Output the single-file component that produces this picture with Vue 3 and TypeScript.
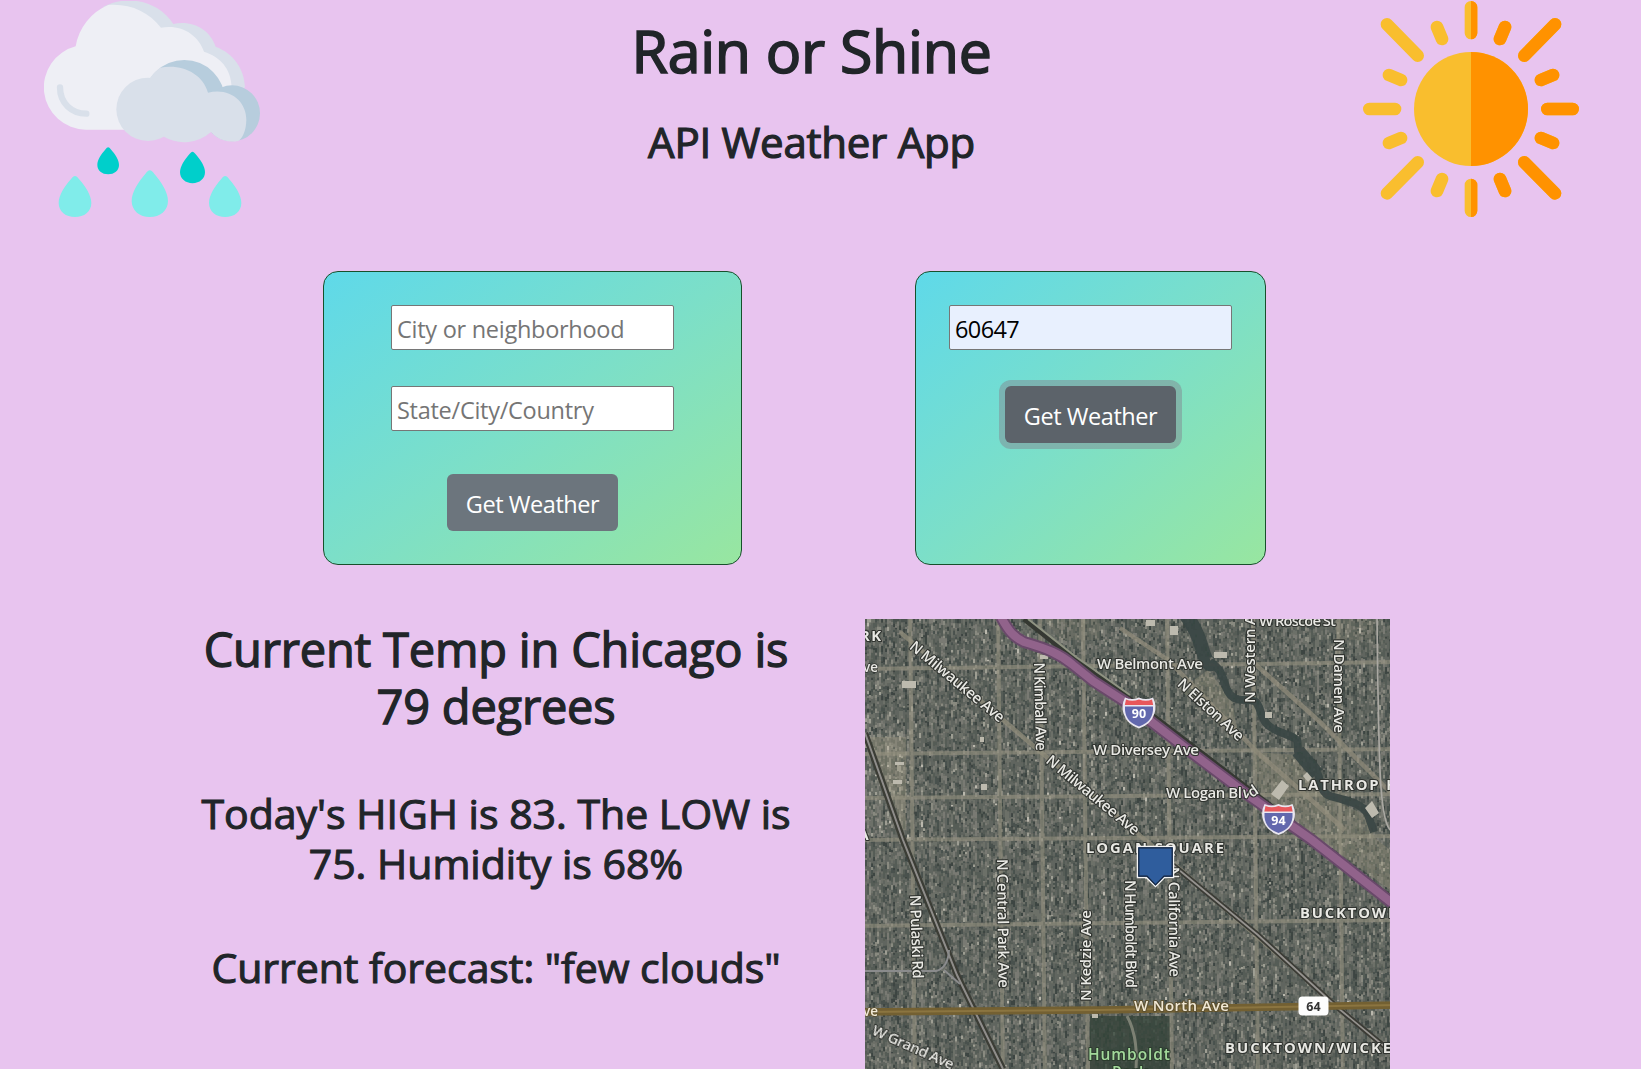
<script setup lang="ts">
interface Label {
  text: string
  x: number
  y: number
  len?: number
  rot?: number
  kind?: string
}

const labels: Label[] = [
  { text: 'RK', x: 860, y: 640.5, len: 21, kind: 'area' },
  { text: 've', x: 863, y: 672, kind: 'small' },
  { text: 'N Milwaukee Ave', x: 908.5, y: 648, len: 118, rot: 39.5 },
  { text: 'N Milwaukee Ave', x: 1045, y: 762, len: 116, rot: 39.5 },
  { text: 'N Kimball Ave', x: 1034, y: 662.5, len: 88.5, rot: 88.7 },
  { text: 'W Belmont Ave', x: 1097, y: 669, len: 106 },
  { text: 'W Diversey Ave', x: 1093, y: 754.5, len: 106 },
  { text: 'W Logan Bl', x: 1166, y: 797.5, len: 76 },
  { text: 'v', x: 1242, y: 797.5, rot: 8 },
  { text: 'd', x: 1252, y: 798, rot: -35 },
  { text: 'N Elston Ave', x: 1176.5, y: 685, len: 84, rot: 42.5 },
  { text: 'N Western Ave', x: 1254.5, y: 703, len: 104, rot: -90 },
  { text: 'W Roscoe St', x: 1259, y: 626, len: 77 },
  { text: 'N Damen Ave', x: 1334, y: 639, len: 94, rot: 90 },
  { text: 'LATHROP H', x: 1298, y: 790, len: 99.5, kind: 'area' },
  { text: 'LOGAN SQUARE', x: 1086, y: 852.5, len: 138, kind: 'area' },
  { text: 'A', x: 858.5, y: 840, kind: 'area' },
  { text: 'N Central Park Ave', x: 997, y: 859, len: 129, rot: 89.3 },
  { text: 'N Pulaski Rd', x: 910, y: 895, len: 84, rot: 88 },
  { text: 'N Kedzie Ave', x: 1091, y: 1001, len: 91, rot: -90 },
  { text: 'N Humboldt Blvd', x: 1125, y: 880, len: 108, rot: 89.5 },
  { text: 'N California Ave', x: 1168.5, y: 867, len: 110, rot: 89.5 },
  { text: 'W North Ave', x: 1134, y: 1011, len: 95, kind: 'warm' },
  { text: 've', x: 863, y: 1016, kind: 'warm small' },
  { text: 'W Grand Ave', x: 871, y: 1034, len: 88, rot: 24 },
  { text: 'BUCKTOWN', x: 1300, y: 918, len: 100, kind: 'area' },
  { text: 'BUCKTOWN/WICKE', x: 1225, y: 1053, len: 166, kind: 'area' },
  { text: 'Humboldt', x: 1088, y: 1060, len: 82, kind: 'park' },
  { text: 'Park', x: 1112, y: 1078, len: 36, kind: 'park' },
]

const MAP = { x: 865, y: 619, w: 525, h: 450 }
const shades = ['#3c4542', '#48514e', '#545c56', '#60655f', '#6c6f68', '#797a73', '#898a80', '#9e9e93', '#bab8ad']

function seeded(seed: number): () => number {
  let s = seed
  return () => {
    s = (s * 1664525 + 1013904223) % 4294967296
    return s / 4294967296
  }
}

// Rooftops, yards and trees as small cells, banded along the north-south blocks.
function blocks(): { fill: string; d: string }[] {
  const rnd = seeded(60647)
  const parts: string[][] = shades.map(() => [])
  for (let x = MAP.x; x < MAP.x + MAP.w; x += 2) {
    const band = Math.cos((x - 910) * 2 * Math.PI / 10.7) * 0.8
    let y = MAP.y
    while (y < MAP.y + MAP.h) {
      const h = 1.5 + rnd() * 3.5
      let v = 2.9 + band + (rnd() + rnd() + rnd() - 1.5) * 3
      if (x < 908 && y > 730 && y < 835) v += 1
      if (rnd() > 0.99) v += 2.5
      const i = Math.max(0, Math.min(shades.length - 1, Math.round(v)))
      parts[i].push(`M${x} ${y.toFixed(1)}h2.1v${h.toFixed(1)}h-2.1z`)
      y += h
    }
  }
  return shades.map((fill, i) => ({ fill, d: parts[i].join('') }))
}

const texture = blocks()
const verticals = [910, 998, 1040, 1083, 1167, 1253, 1338]
const horizontals = [[669, 662], [754, 749], [798, 794], [840, 836], [926, 920]]
const highway = 'M1001 617C1009 632 1014 637 1024 642C1048 649 1060 654 1073 665L1093 681L1127 703L1192 753L1245 793L1312 840L1392 903'
const pulaskiRail = 'M865 733L903 840L957 975L1003 1069'
const metraRail = 'M1173 865L1258 935L1338 1008L1390 1051'
</script>

<template>
  <div class="app">
    <header class="header">
      <svg class="icon" viewBox="42 3 648 648">
        <defs>
          <path id="drop" d="M50 0C46 0 42 4 38 9C18 32 0 58 0 82C0 108 22 125 50 125C78 125 100 108 100 82C100 58 82 32 62 9C58 4 54 0 50 0Z" />
        </defs>
        <path fill="#d9e0ea" d="M220 20C300 -20 390 8 430 72C490 60 540 90 557 140C610 160 643 205 645 262L600 300L300 200Z" />
        <path fill="#eeeff5" d="M167 389A127 127 0 0 1 137 139A162 162 0 0 1 235 15C300 10 355 35 393 83C455 72 505 105 522 155C570 170 603 205 605 262L400 389Z" />
        <circle fill="#b7cddd" cx="463" cy="302" r="122" />
        <circle fill="#b7cddd" cx="606" cy="340" r="84" />
        <circle fill="#d9e0ea" cx="354" cy="328" r="95" />
        <path fill="#d9e0ea" d="M360 234Q372 216 390 203C455 190 518 220 534 278C600 262 650 305 649 360C648 390 640 410 627 422A84 84 0 0 1 543 396A122 122 0 0 1 403 411L340 330Z" />
        <path d="M90 262C90 310 125 341 169 341" fill="none" stroke="#d9e0ea" stroke-width="19" stroke-linecap="round" />
        <g fill="#80ecea">
          <use href="#drop" transform="translate(86 528) scale(.98 .984)" />
          <use href="#drop" transform="translate(305 511) scale(1.09 1.12)" />
          <use href="#drop" transform="translate(537 528) scale(.97 .984)" />
        </g>
        <g fill="#00cfcb">
          <use href="#drop" transform="translate(202 442) scale(.65 .648)" />
          <use href="#drop" transform="translate(450 455) scale(.75 .756)" />
        </g>
      </svg>
      <div class="titles">
        <h1>Rain or Shine</h1>
        <h2>API Weather App</h2>
      </div>
      <svg class="icon" viewBox="39 3 648 648">
        <defs>
          <clipPath id="east"><rect x="363" y="0" width="330" height="660" /></clipPath>
          <g id="sun" stroke-width="38" stroke-linecap="round">
            <circle cx="363" cy="327" r="171" stroke="none" />
            <path d="M363 22V99M363 555V632M58 327H135M592 327H668M111 73L203 167M615 73L523 167M111 580L203 487M615 580L523 487M261 81L276 117M465 81L450 117M261 573L276 537M465 573L450 537M117 225L153 240M609 225L573 240M117 429L153 414M609 429L573 414" />
          </g>
        </defs>
        <use href="#sun" fill="#f9be2e" stroke="#f9be2e" />
        <use href="#sun" fill="#ff9200" stroke="#ff9200" clip-path="url(#east)" />
      </svg>
    </header>

    <section class="forms">
      <form class="card wide" @submit.prevent>
        <input class="field" type="text" placeholder="City or neighborhood">
        <input class="field second" type="text" placeholder="State/City/Country">
        <button class="btn low" type="button">Get Weather</button>
      </form>
      <form class="card" @submit.prevent>
        <input class="field filled" type="text" value="60647">
        <button class="btn active" type="button">Get Weather</button>
      </form>
    </section>

    <section class="results">
      <div class="report">
        <h2 class="temp">Current Temp in Chicago is<br>79 degrees</h2>
        <h3 class="range">Today's HIGH is 83. The LOW is<br>75. Humidity is 68%</h3>
        <h3 class="forecast">Current forecast: "few clouds"</h3>
      </div>

      <svg class="map" viewBox="865 619 525 450">
        <defs>
          <filter id="soft" filterUnits="userSpaceOnUse" x="865" y="619" width="525" height="450"><feGaussianBlur stdDeviation="0.75" /></filter>
          <g id="interstate">
            <path d="M-14 -15Q-7 -12 0 -15Q7 -12 14 -15Q18 -7 15.500 1Q12 12 0 16Q-12 12 -15.500 1Q-18 -7 -14 -15Z" fill="#e9e6f0" />
            <path d="M-14 -6H14Q15 9 0 14Q-15 9 -14 -6Z" fill="#6268ad" />
            <path d="M-13 -13Q-7 -10.500 0 -13Q7 -10.500 13 -13L14.200 -7.500H-14.200Z" fill="#e8575b" />
          </g>
        </defs>
        <g filter="url(#soft)">
          <rect x="855" y="609" width="545" height="470" fill="#5c5f57" />
          <path v-for="t in texture" :key="t.fill" :d="t.d" :fill="t.fill" />
          <g fill="#a19a80" opacity=".32">
            <path d="M1254 752L1297 755L1325 795L1365 815L1375 838L1390 850V890L1310 832L1258 792Z" />
            <path d="M1208 670L1232 700L1240 745L1215 720L1180 690Z" />
            <path d="M865 737H906V830H897Z" />
            <path d="M1340 619H1375V640H1340ZM1045 619H1100V640H1060Z" opacity=".5" />
          </g>
          <path d="M1090 1016H1170V1069H1090Z" fill="#35433a" opacity=".8" />
          <path d="M1127 1016Q1140 1040 1135 1079" fill="none" stroke="#7b8073" stroke-width="3" />
          <g stroke="#959180" stroke-width="4" opacity=".62">
            <path v-for="v in verticals" :key="v" :d="`M${v} 609L${v + 5} 1079`" />
            <path v-for="h in horizontals" :key="h[0]" :d="`M855 ${h[0]}L1400 ${h[1]}`" />
          </g>
          <g fill="none" stroke="#938e7c" stroke-width="4.500" opacity=".7">
            <path d="M900 632L1030 743L1175 865L1390 1052" />
            <path d="M1120 628L1168 660L1258 753L1300 790L1345 830" />
            <path d="M1255 664L1320 722L1390 792" />
          </g>
          <g fill="none" stroke="#3a4644" opacity=".93" stroke-linejoin="round">
            <path d="M1186 615Q1197 630 1202 648T1212 664" stroke-width="14" />
            <path d="M1210 662C1228 672 1221 690 1234 698C1242 702 1250 698 1256 702C1262 710 1261 720 1268 725C1276 733 1290 734 1297 740C1299 746 1296 752 1300 756" stroke-width="8" />
            <path d="M1298 751L1317 774" stroke-width="14" />
            <path d="M1315 770C1322 776 1318 792 1330 796C1346 800 1364 804 1368 815L1374 832" stroke-width="8" />
          </g>
          <path fill="#bdbaae" d="M1146 620h9v6h-9zM1170 626h8v9h-8zM1214 652h13v6h-13zM1265 712h7v6h-7zM1271 794l11 -14l7 6l-10 14zM1303 776l4 -4l5 6l-4 4zM1365 808l7 -7l7 12l-7 5zM1040 655h8v4h-8zM902 681h14v7h-14zM981 784h6v6h-6zM980 737h4v5h-4zM895 762h9v3h-9zM893 780h9v4h-9zM1092 1014h6v4h-6z" />
          <g fill="none">
            <path :d="pulaskiRail" stroke="#3b3c36" stroke-width="6.500" />
            <path :d="pulaskiRail" stroke="#8f8d8a" stroke-width="2" />
            <path d="M865 971H936Q948 968 949 950M944 970L960 984" stroke="#8a8b8c" stroke-width="2" />
            <path :d="metraRail" stroke="#3a3b35" stroke-width="5.500" />
            <path :d="metraRail" stroke="#96938f" stroke-width="1.700" />
            <path d="M1377 615Q1378 720 1380 770T1390 830" stroke="#aaa8a2" stroke-width="1.700" />
            <path d="M1024 619L1072 657L1130 699L1160 721L1390 897" stroke="#343831" stroke-width="5" />
            <path d="M1028 619L1076 657L1130 695" stroke="#8f9382" stroke-width="2" />
            <path d="M855 1012L1100 1010L1400 1005" stroke="#736032" stroke-width="7.500" />
            <path d="M855 1012L1100 1010L1400 1005" stroke="#8b7440" stroke-width="2" />
            <path :d="highway" stroke="#69496a" stroke-width="12" />
            <path :d="highway" stroke="#91648b" stroke-width="8" />
          </g>
        </g>

        <text
          v-for="(l, i) in labels"
          :key="i"
          class="label"
          :class="l.kind"
          :textLength="l.len"
          :transform="`translate(${l.x} ${l.y}) rotate(${l.rot ?? 0})`"
        >{{ l.text }}</text>

        <use href="#interstate" transform="translate(1139 712.500)" />
        <text class="route" x="1139" y="718">90</text>
        <use href="#interstate" transform="translate(1278.500 819)" />
        <text class="route" x="1278.500" y="824.500">94</text>
        <rect x="1298.500" y="996.500" width="30" height="19" rx="4" fill="#fdfdfd" />
        <text class="route dark" x="1313.500" y="1010.500">64</text>
        <path d="M1137.500 846.500H1173.500V877.500H1164.500L1155.500 886.500L1146.500 877.500H1137.500Z" fill="#2d5b9b" stroke="#f4f4f4" stroke-width="1.500" />
        <path d="M1138.800 847.800H1172.200V876.200H1164L1155.500 884.800L1147 876.200H1138.800Z" fill="#2f5d9d" stroke="#14233b" stroke-width="1.200" />
      </svg>
    </section>
  </div>
</template>

<style>
body {
  background: #e8c4ef;
}
</style>

<style scoped>
* {
  box-sizing: border-box;
}
.app {
  height: 1069px;
  overflow: hidden;
  background: #e8c4ef;
  color: #212529;
  font-family: "Open Sans", "Noto Sans", sans-serif;
}
.header {
  display: flex;
  justify-content: space-between;
  padding: 1px 62px 0 44px;
  height: 271px;
}
.icon {
  width: 216px;
  height: 216px;
}
.titles {
  text-align: center;
}
h1, h2, h3 {
  margin: 0;
  font-weight: 400;
  line-height: 1.2;
  white-space: nowrap;
  -webkit-text-stroke: 1.1px #212529;
}
h1 {
  margin-top: 14px;
  font-size: 59px;
  letter-spacing: -.25px;
  -webkit-text-stroke-width: 1.7px;
}
.titles h2 {
  margin-top: 31px;
  font-size: 42px;
  letter-spacing: -.25px;
  -webkit-text-stroke-width: 1.2px;
}
.forms {
  display: flex;
  gap: 173px;
  padding-left: 323px;
}
.card {
  display: flex;
  flex-direction: column;
  align-items: center;
  width: 351px;
  height: 294px;
  padding-top: 33px;
  border: 1px solid #17502b;
  border-radius: 15px;
  background: linear-gradient(to bottom right, #5fd9e9, #7cdfc8 50%, #98e6a0);
}
.wide {
  width: 419px;
}
.field {
  width: 283px;
  height: 45px;
  padding: 2px 5px 0;
  border: 1px solid #767676;
  border-radius: 2px;
  background: #fff;
  color: #000;
  font: 23.5px "Open Sans", sans-serif;
  letter-spacing: -.27px;
  outline: none;
}
.field::placeholder {
  color: #757575;
}
.second {
  margin-top: 36px;
}
.filled {
  background: #e8f0fe;
  letter-spacing: -.6px;
}
.btn {
  width: 171px;
  height: 57px;
  margin-top: 36px;
  padding: 3px 0 0;
  border: 0;
  border-radius: 6px;
  background: #6c757d;
  color: #fff;
  font: 23.5px "Open Sans", sans-serif;
  letter-spacing: -.45px;
  white-space: nowrap;
}
.low {
  margin-top: 43px;
}
.active {
  background: #5c636a;
  box-shadow: 0 0 0 6px rgba(130, 138, 145, .5);
}
.results {
  display: flex;
  gap: 63px;
  margin-top: 54px;
  padding-left: 190px;
}
.report {
  width: 612px;
  padding-top: 2px;
  text-align: center;
}
.temp {
  font-size: 47px;
  line-height: 57px;
  letter-spacing: -.2px;
  -webkit-text-stroke-width: 1.3px;
}
.range {
  margin-top: 53px;
  font-size: 41px;
  line-height: 50px;
}
.forecast {
  margin-top: 54px;
  font-size: 41px;
  line-height: 50px;
  letter-spacing: -.05px;
}
.map {
  width: 525px;
  height: 450px;
  overflow: hidden;
}
.label {
  fill: #e9e9e4;
  stroke: #30332f;
  stroke-width: 2.2px;
  stroke-linejoin: round;
  paint-order: stroke;
  font-size: 15px;
  font-weight: 600;
}
.area {
  font-size: 14.8px;
  font-weight: 700;
}
.warm {
  fill: #f1e8d4;
  stroke: #5d5131;
}
.small {
  font-size: 13.5px;
  stroke-width: 1.4px;
}
.park {
  fill: #a3d99b;
  stroke: #2c3c2e;
  font-size: 15.5px;
}
.route {
  fill: #fff;
  font-size: 12.5px;
  font-weight: 700;
  text-anchor: middle;
}
.dark {
  fill: #333;
}
</style>
